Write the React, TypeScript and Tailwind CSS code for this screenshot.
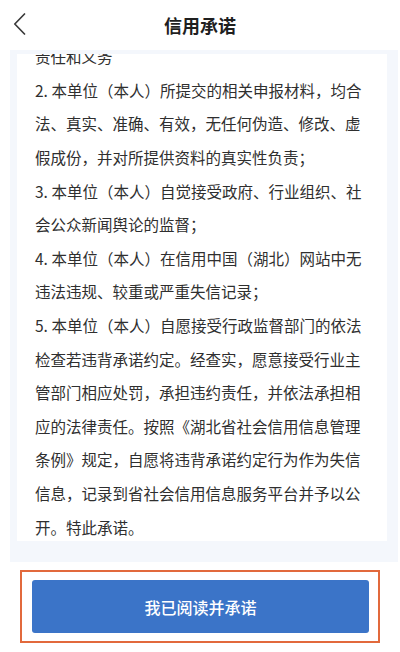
const paragraphs = [
  '责任和义务',
  '2. 本单位（本人）所提交的相关申报材料，均合法、真实、准确、有效，无任何伪造、修改、虚假成份，并对所提供资料的真实性负责；',
  '3. 本单位（本人）自觉接受政府、行业组织、社会公众新闻舆论的监督；',
  '4. 本单位（本人）在信用中国（湖北）网站中无违法违规、较重或严重失信记录；',
  '5. 本单位（本人）自愿接受行政监督部门的依法检查若违背承诺约定。经查实，愿意接受行业主管部门相应处罚，承担违约责任，并依法承担相应的法律责任。按照《湖北省社会信用信息管理条例》规定，自愿将违背承诺约定行为作为失信信息，记录到省社会信用信息服务平台并予以公开。特此承诺。',
];

export default function App() {
  return (
    <div className="flex h-[652px] w-[400px] flex-col overflow-hidden bg-white font-['Noto_Sans_CJK_SC','Noto_Sans',sans-serif]">
      {/* 顶部导航 */}
      <header className="grid h-[50px] shrink-0 grid-cols-[50px_1fr_50px] items-center">
        <div className="flex items-center pl-[13px] pb-[2px]">
          <svg width="13" height="22" viewBox="0 0 13 22" fill="none">
            <path d="M11.5 1 L1.8 11 L11.5 21" stroke="#3a3a3a" strokeWidth="1.7" strokeLinecap="round" strokeLinejoin="round" />
          </svg>
        </div>
        <h1 className="text-center text-[18px] font-bold text-[#1f1f1f]">信用承诺</h1>
        <div />
      </header>

      {/* 承诺内容 */}
      <div className="ml-[10px] mr-[2px] h-[512px] shrink-0 bg-[#f4f7fc] pb-[21px] pl-[7px] pr-[11px] pt-[4px]">
        <div className="h-full overflow-hidden bg-white pl-[18px] pr-[22px]">
          <div className="mt-[-13.8px] text-[15.5px] leading-[33.6px] text-[#2f2f2f]">
            {paragraphs.map((p) => (
              <p key={p}>{p}</p>
            ))}
          </div>
        </div>
      </div>

      {/* 底部按钮 */}
      <div className="mx-[20px] mt-[8px] h-[73px] border-2 border-[#e2693c] pl-[10px] pr-[9px] pt-[8px]">
        <button
          type="button"
          className="flex h-[53px] w-full items-center justify-center rounded-[3px] bg-[#3b74c8] text-[16px] font-medium text-white"
        >
          我已阅读并承诺
        </button>
      </div>
    </div>
  );
}
